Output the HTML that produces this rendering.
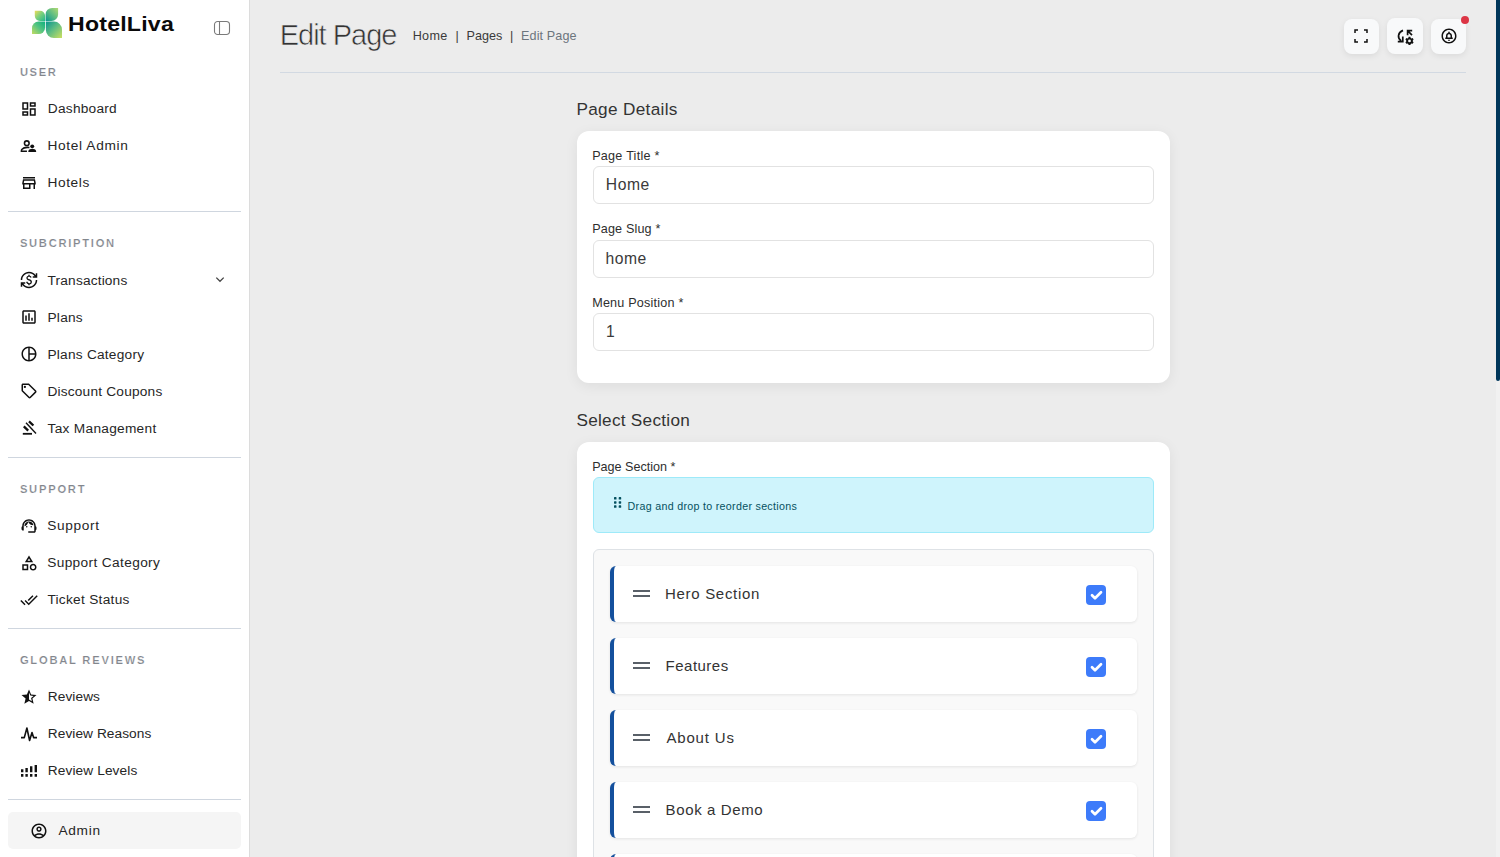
<!DOCTYPE html>
<html lang="en">
<head>
<meta charset="utf-8">
<title>Edit Page - HotelLiva</title>
<style>
*{box-sizing:border-box;margin:0;padding:0}
html,body{width:1500px;height:857px;overflow:hidden}
body{background:#ececec;font-family:"Liberation Sans",Arial,sans-serif;color:#2b2b2b;position:relative}
.abs{position:absolute;white-space:nowrap;line-height:1}
/* sidebar */
#sidebar{position:absolute;left:0;top:0;width:250px;height:857px;background:#fff;border-right:1px solid #dcdcdc}
.sec{position:absolute;left:20px;font-size:11.2px;font-weight:700;letter-spacing:2.1px;color:#82868d;-webkit-text-stroke:.2px #fff;line-height:1;white-space:nowrap}
.mi{position:absolute;left:48px;font-size:13.7px;color:#262626;line-height:1;white-space:nowrap}
.ic{position:absolute;left:19.4px;width:19.2px;height:19.2px;fill:#111}
.hr{position:absolute;left:8px;width:233px;height:1px;background:#cfd6df}
#admin{position:absolute;left:8px;top:812px;width:233px;height:37px;background:#f5f5f5;border-radius:5px}
/* header */
#h1{left:281px;top:20px;font-size:29px;font-weight:400;color:#333;-webkit-text-stroke:.6px #ececec}
.bc{font-size:12.6px;color:#3a3a3a}
.tb{position:absolute;top:19px;width:35px;height:35px;background:#f8f9fa;border-radius:8px;box-shadow:0 2px 6px rgba(0,0,0,.08)}
.tb svg{position:absolute;fill:#111}
/* cards */
.card{position:absolute;left:577px;width:593px;background:#fff;border-radius:12px;box-shadow:0 3px 14px rgba(0,0,0,.065)}
.h5{font-size:17.2px;color:#333;left:577px}
.lbl{font-size:12.6px;color:#2e2e2e;left:593px}
.inp{position:absolute;left:593px;width:561px;height:38px;border:1px solid #e2e2e2;border-radius:6px;background:#fff}
.iv{font-size:15.7px;color:#3a3a3a}
.item{position:absolute;left:610px;width:527px;height:56px;background:#fff;border-left:4px solid #14509d;border-radius:6px;box-shadow:0 1px 3px rgba(0,0,0,.09)}
.it{font-size:15px;color:#333}
.item .g{position:absolute;left:19px;top:24px;width:17px;height:7px;border-top:2px solid #596068;border-bottom:2px solid #596068}
.item .cb{position:absolute;left:472px;top:19px;width:20px;height:20px;border-radius:4px;background:#3d7bfa}
.item .cb svg{position:absolute;left:0;top:0}
</style>
</head>
<body>

<!-- ============ SIDEBAR ============ -->
<div id="sidebar">
  <svg style="position:absolute;left:30px;top:6px" width="34" height="34" viewBox="30 6 34 34">
    <defs>
      <linearGradient id="gtl" x1="1" y1="1" x2="0" y2="0"><stop offset="0" stop-color="#1fb98a"/><stop offset=".55" stop-color="#7fd07c"/><stop offset="1" stop-color="#f0dc58"/></linearGradient>
      <linearGradient id="gtr" x1="0" y1="1" x2="1" y2="0"><stop offset="0" stop-color="#0a958e"/><stop offset=".5" stop-color="#5cbc84"/><stop offset="1" stop-color="#b4da72"/></linearGradient>
      <linearGradient id="gbl" x1="1" y1="0" x2="0" y2="1"><stop offset="0" stop-color="#0cb07e"/><stop offset=".5" stop-color="#58c582"/><stop offset="1" stop-color="#c4dc62"/></linearGradient>
      <linearGradient id="gbr" x1="0" y1="0" x2="1" y2="1"><stop offset="0" stop-color="#0a958e"/><stop offset=".45" stop-color="#5cbc84"/><stop offset="1" stop-color="#cce060"/></linearGradient>
    </defs>
    <path fill="url(#gtl)" d="M34.800 10.800H40a5.100 5.100 0 0 1 5.100 5.100V20.900H39.900a5.100 5.100 0 0 1-5.100-5.100z"/>
    <path fill="url(#gtr)" d="M58.100 7.900V14.400a6.500 6.500 0 0 1-6.500 6.500H45.600V14.400a6.500 6.500 0 0 1 6.500-6.500z"/>
    <path fill="url(#gbl)" d="M32 34.100V28.100a6.500 6.500 0 0 1 6.500-6.500H45.100V27.600a6.500 6.500 0 0 1-6.500 6.500z"/>
    <path fill="url(#gbr)" d="M45.900 21.600H54a8 8 0 0 1 8 8V38H53.900a8 8 0 0 1-8-8z"/>
  </svg>
  <div class="abs" id="logotxt" style="transform:scaleX(1.1);transform-origin:0 0;left:67.80px;top:12.80px;font-size:21px;font-weight:700;color:#0a0a0a;letter-spacing:0.201px">HotelLiva</div>

  <svg style="position:absolute;left:213px;top:20px" width="18" height="16" viewBox="0 0 18 16"><rect x="1.500" y="1.500" width="15" height="13" rx="3.200" fill="none" stroke="#7a7a7a" stroke-width="1.100"/><path d="M6.500 1.500v13" stroke="#7a7a7a" stroke-width="1.100"/></svg>
  <svg style="position:absolute;left:214px;top:275px" width="12" height="10" viewBox="0 0 12 10"><path d="M2.300 2.600L6 6.300 9.700 2.600" fill="none" stroke="#444" stroke-width="1.300"/></svg>
  <div class="sec" id="s_user" style="top:67.00px;left:19.9px;letter-spacing:1.62px">USER</div>
  <div class="mi" id="t_dash" style="top:102.00px;left:47.80px;letter-spacing:0.247px">Dashboard</div>
  <div class="mi" id="t_hadm" style="top:139.00px;left:47.40px;letter-spacing:0.660px">Hotel Admin</div>
  <div class="mi" id="t_hotels" style="top:176.00px;left:47.40px;letter-spacing:0.640px">Hotels</div>
  <div class="hr" style="top:211px"></div>

  <div class="sec" id="s_sub" style="top:238.00px;left:19.9px;letter-spacing:1.72px">SUBCRIPTION</div>
  <div class="mi" id="t_trans" style="top:274.00px;left:47.60px;letter-spacing:0.162px">Transactions</div>
  <div class="mi" id="t_plans" style="top:311.00px;left:47.50px;letter-spacing:0.228px">Plans</div>
  <div class="mi" id="t_pcat" style="top:348.00px;left:47.50px;letter-spacing:0.225px">Plans Category</div>
  <div class="mi" id="t_disc" style="top:385.00px;left:47.40px;letter-spacing:0.200px">Discount Coupons</div>
  <div class="mi" id="t_tax" style="top:422.00px;left:47.60px;letter-spacing:0.278px">Tax Management</div>
  <div class="hr" style="top:457px"></div>

  <div class="sec" id="s_support" style="top:484.00px;left:19.9px;letter-spacing:1.76px">SUPPORT</div>
  <div class="mi" id="t_supp" style="top:519.00px;left:47.20px;letter-spacing:0.667px">Support</div>
  <div class="mi" id="t_scat" style="top:556.00px;left:47.20px;letter-spacing:0.360px">Support Category</div>
  <div class="mi" id="t_tick" style="top:593.00px;left:47.40px;letter-spacing:0.283px">Ticket Status</div>
  <div class="hr" style="top:628px"></div>

  <div class="sec" id="s_global" style="top:655.00px;left:19.9px;letter-spacing:1.76px">GLOBAL REVIEWS</div>
  <div class="mi" id="t_rev" style="top:690.00px;left:47.80px;letter-spacing:0.067px">Reviews</div>
  <div class="mi" id="t_rreas" style="top:727.00px;left:47.80px;letter-spacing:0.063px">Review Reasons</div>
  <div class="mi" id="t_rlev" style="top:764.00px;left:47.80px;letter-spacing:0.100px">Review Levels</div>
  <div class="hr" style="top:799px"></div>

  <div id="admin"></div>
  <!-- menu icons -->
  <svg class="ic" id="ic_dashboard" style="left:20.00px;top:99.95px;width:18px;height:18px" viewBox="0 0 24 24"><path d="M19 5v2h-4V5h4M9 5v6H5V5h4m10 8v6h-4v-6h4M9 17v2H5v-2h4M21 3h-8v6h8V3zM11 3H3v10h8V3zm10 8h-8v10h8V11zm-10 4H3v6h8v-6z"/></svg>
  <svg class="ic" id="ic_supervisor" style="left:19.02px;top:137.25px;width:18.69px;height:18.69px" viewBox="0 0 24 24"><circle cx="10" cy="8" r="3" fill="none" stroke="#111" stroke-width="2"/><path d="M13.400 13.500C9.500 13 5.200 14.200 3.800 15.700 3.100 16.400 3.100 17 3.100 18.200H10.200" fill="none" stroke="#111" stroke-width="2"/><circle cx="17" cy="12" r="2.500"/><path d="M12 19.200v-1c0-2.100 3.300-3.100 5-3.100s5 1 5 3.100v1z"/></svg>
  <svg class="ic" id="ic_store" style="left:20.00px;top:173.90px;width:18px;height:18px" viewBox="0 0 24 24"><path d="M18.36 9l.6 3H5.04l.6-3h12.72M20 4H4v2h16V4zm0 3H4l-1 5v2h1v6h10v-6h4v6h2v-6h1v-2l-1-5zM6 18v-4h6v4H6z"/></svg>
  <svg class="ic" id="ic_currency" style="left:20.05px;top:270.70px;width:18px;height:18px" viewBox="0 0 24 24"><path d="M12.89 11.1c-1.78-.59-2.64-.96-2.64-1.9 0-1.02 1.11-1.39 1.81-1.39 1.31 0 1.79.99 1.9 1.34l1.58-.67c-.15-.44-.82-1.91-2.66-2.23V5h-1.75v1.26c-2.6.56-2.62 2.85-2.62 2.96 0 2.27 2.25 2.91 3.35 3.31 1.58.56 2.28 1.07 2.28 2.03 0 1.13-1.05 1.61-1.98 1.61-1.82 0-2.34-1.87-2.4-2.09l-1.66.67c.63 2.19 2.28 2.78 3.02 2.96V19h1.75v-1.24c.52-.09 3.02-.59 3.02-3.22.01-1.39-.6-2.61-3-3.44zM3 21H1v-6h6v2H4.520c1.610 2.410 4.360 4 7.480 4 4.970 0 9-4.030 9-9h2c0 6.080-4.920 11-11 11-3.720 0-7.010-1.850-9-4.670V21zm-2-9C1 5.920 5.920 1 12 1c3.720 0 7.010 1.850 9 4.670V3h2v6h-6V7h2.480C17.870 4.590 15.120 3 12 3c-4.970 0-9 4.030-9 9H1z"/></svg>
  <svg class="ic" id="ic_chart" style="left:19.90px;top:308.00px;width:18px;height:18px" viewBox="0 0 24 24"><path d="M9 17H7v-7h2v7zm4 0h-2V7h2v10zm4 0h-2v-4h2v4zm2 2H5V5h14v14zm0-16H5c-1.100 0-2 .9-2 2v14c0 1.100.9 2 2 2h14c1.100 0 2-.9 2-2V5c0-1.100-.9-2-2-2z"/></svg>
  <svg class="ic" id="ic_pie" style="left:20.00px;top:344.85px;width:18px;height:18px" viewBox="0 0 24 24"><path d="M12 2C6.470 2 2 6.470 2 12s4.470 10 10 10 10-4.470 10-10S17.530 2 12 2zm1 2.070c3.610.450 6.480 3.330 6.930 6.930H13V4.070zM4 12c0-4.060 3.070-7.440 7-7.930v15.870c-3.930-.5-7-3.880-7-7.940zm9 7.930V13h6.930c-.450 3.610-3.320 6.480-6.930 6.930z"/></svg>
  <svg class="ic" id="ic_sell" style="left:20.10px;top:381.70px;width:18px;height:18px" viewBox="0 0 24 24"><path d="M21.410 11.410l-8.830-8.830C12.210 2.210 11.700 2 11.170 2H4c-1.100 0-2 .9-2 2v7.170c0 .53.210 1.040.59 1.410l8.830 8.830c.78.78 2.050.78 2.830 0l7.170-7.170c.78-.78.78-2.040-.010-2.830zM12.830 20L4 11.170V4h7.170L20 12.830 12.830 20z"/><circle cx="6.500" cy="6.500" r="1.500"/></svg>
  <svg class="ic" id="ic_gavel" style="left:14px;top:410px;width:30px;height:30px" viewBox="14 410 30 30"><g stroke="#111" fill="none"><path d="M29 421.300L33.400 425.500M23.800 426.400L28.200 430.600" stroke-width="2.300"/><path d="M26 422.800L36 433.400" stroke-width="1.400"/><path d="M22.800 433.800H32" stroke-width="1.800"/></g></svg>
  <svg class="ic" id="ic_agent" style="left:20.30px;top:516.95px;width:18px;height:18px" viewBox="0 0 24 24"><path d="M21 12.220C21 6.730 16.740 3 12 3c-4.690 0-9 3.650-9 9.280-.6.340-1 .980-1 1.720v2c0 1.100.9 2 2 2h1v-6.100c0-3.870 3.130-7 7-7s7 3.130 7 7V19h-8v2h8c1.100 0 2-.9 2-2v-1.220c.59-.31 1-.92 1-1.640v-2.300c0-.70-.41-1.310-1-1.620z"/><circle cx="9" cy="13" r="1"/><circle cx="15" cy="13" r="1"/><path d="M18 11.030C17.520 8.180 15.040 6 12.050 6c-3.030 0-6.290 2.510-6.030 6.450 2.470-1.010 4.330-3.210 4.860-5.890 1.310 2.630 4 4.440 7.120 4.470z"/></svg>
  <svg class="ic" id="ic_category" style="left:20.25px;top:553.95px;width:18px;height:18px" viewBox="0 0 24 24"><path d="M12 2l-5.500 9h11L12 2zm0 3.840L13.930 9h-3.870L12 5.840zM17.500 13c-2.490 0-4.500 2.010-4.500 4.500s2.010 4.500 4.500 4.500 4.500-2.010 4.500-4.500-2.010-4.500-4.500-4.500zm0 7c-1.380 0-2.500-1.120-2.500-2.500s1.120-2.500 2.500-2.500 2.500 1.120 2.500 2.500-1.120 2.500-2.500 2.500zM3 21.500h8v-8H3v8zm2-6h4v4H5v-4z"/></svg>
  <svg class="ic" id="ic_doneall" style="left:20.08px;top:590.80px;width:18px;height:18px" viewBox="0 0 24 24"><path d="M18 7l-1.410-1.410-6.340 6.340 1.410 1.410L18 7zm4.240-1.410L11.660 16.170 7.480 12l-1.410 1.410L11.660 19l12-12-1.420-1.410zM.41 13.410L6 19l1.410-1.410L1.830 12 .41 13.410z"/></svg>
  <svg class="ic" id="ic_star" style="left:20.10px;top:688.20px;width:18px;height:18px" viewBox="0 0 24 24"><path d="M22 9.240l-7.190-.62L12 2 9.190 8.630 2 9.240l5.460 4.730L5.820 21 12 17.270 18.180 21l-1.630-7.030L22 9.240zM12 15.400V6.100l1.710 4.040 4.380.38-3.320 2.880 1 4.280L12 15.400z"/></svg>
  <svg class="ic" id="ic_vital" style="left:14px;top:720px;width:30px;height:30px" viewBox="14 720 30 30"><path d="M21 737.600H24.300L26.900 728 29.600 740.500 32 732.500 33.600 737.600H37" fill="none" stroke="#111" stroke-width="1.600" stroke-linejoin="round"/></svg>
  <svg class="ic" id="ic_levels" style="left:14px;top:755px;width:30px;height:30px" viewBox="14 755 30 30"><path d="M21 769.2h2.400V772.300h-2.400zM21 774.100h2.400v2.700h-2.400zM25.4 768.1h2.400V772.300h-2.400zM25.4 774.100h2.400v2.700h-2.400zM30 766.3h2.400V772.300h-2.400zM30 774.100h2.400v2.700h-2.400zM34.6 765h2.400V772.300h-2.400zM34.6 774.100h2.400v2.700h-2.400z"/></svg>
  <svg class="ic" id="ic_account" style="left:29.90px;top:821.85px;width:18px;height:18px" viewBox="0 0 24 24"><path d="M12 2C6.480 2 2 6.480 2 12s4.480 10 10 10 10-4.480 10-10S17.520 2 12 2zM7.350 18.500C8.660 17.560 10.260 17 12 17s3.340.56 4.650 1.500C15.340 19.440 13.740 20 12 20s-3.340-.56-4.650-1.500zm10.790-1.380C16.450 15.800 14.320 15 12 15s-4.450.80-6.140 2.120C4.700 15.730 4 13.950 4 12c0-4.420 3.580-8 8-8s8 3.580 8 8c0 1.950-.70 3.730-1.860 5.120zM12 6c-1.930 0-3.500 1.570-3.500 3.500S10.070 13 12 13s3.500-1.570 3.500-3.500S13.930 6 12 6zm0 5c-.83 0-1.500-.67-1.500-1.500S11.170 8 12 8s1.500.67 1.500 1.500S12.830 11 12 11z"/></svg>
  <div class="mi" id="t_admin" style="left:58.40px;top:824.21px;letter-spacing:0.700px">Admin</div>
</div>

<!-- ============ HEADER ============ -->
<div class="abs" id="h1" style="left:279.70px;top:20.71px;letter-spacing:-1.000px">Edit Page</div>
<div class="abs bc" id="b_home" style="left:412.70px;top:29.90px;letter-spacing:0.334px">Home</div>
<div class="abs bc" id="b_p1" style="left:455.4px;top:29.91px">|</div>
<div class="abs bc" id="b_pages" style="left:466.50px;top:29.90px;letter-spacing:0.000px">Pages</div>
<div class="abs bc" id="b_p2" style="left:509.9px;top:29.91px">|</div>
<div class="abs bc" id="b_edit" style="left:521.00px;top:29.90px;color:#6c757d;letter-spacing:0.125px">Edit Page</div>
<div style="position:absolute;left:280px;top:72px;width:1186px;height:1px;background:#d2d9e2"></div>

<div class="tb" style="left:1344px"><svg style="left:8.45px;top:7.9px" width="18" height="18" viewBox="0 0 24 24"><path d="M3 21v-5h2v3h3v2H3zm13 0v-2h3v-3h2v5h-5zM3 8V3h5v2H5v3H3zm16 0V5h-3V3h5v5h-2z"/></svg></div>
<div class="tb" style="left:1387px;top:18px;width:36px;height:36px"><svg style="left:0;top:0" width="36" height="36" viewBox="0 0 36 36"><g fill="none" stroke="#111" stroke-width="1.7"><path d="M16 12.400C10.800 14.600 10 19.800 14.200 23"/><path d="M10.800 23.600H15.800V18.600"/><path d="M25.200 12.700H20.600V17.300M20.800 12.900L25 17.100"/></g><path fill-rule="evenodd" d="M21.600 18.800h1.800l.3 1.100.9.500 1.100-.3.900 1.500-.8.800v1l.8.800-.9 1.500-1.100-.3-.9.500-.3 1.100h-1.800l-.3-1.100-.9-.500-1.100.3-.9-1.500.8-.8v-1l-.8-.800.9-1.500 1.100.3.900-.500zM22.500 21.500a1.400 1.400 0 1 0 0 2.800 1.400 1.400 0 0 0 0-2.800z"/></g></svg></div>
<div class="tb" style="left:1431px"><svg style="left:8.5px;top:7.7px" width="18" height="18" viewBox="0 0 24 24"><path d="M12 18.500c.83 0 1.500-.67 1.500-1.500h-3c0 .83.67 1.500 1.500 1.500zM12 2C6.480 2 2 6.480 2 12s4.480 10 10 10 10-4.480 10-10S17.520 2 12 2zm0 18c-4.410 0-8-3.590-8-8s3.590-8 8-8 8 3.590 8 8-3.590 8-8 8zm4-8.500c0-1.860-1.280-3.410-3-3.860V7c0-.55-.45-1-1-1s-1 .45-1 1v.64c-1.720.45-3 2-3 3.860V14H7v2h10v-2h-1v-2.500zM14 14h-4v-2.500c0-1.100.9-2 2-2s2 .9 2 2V14z"/></svg></div>
<div style="position:absolute;left:1461px;top:16px;width:8px;height:8px;border-radius:50%;background:#dc3545"></div>

<!-- scrollbar -->
<div style="position:absolute;left:1496px;top:0;width:4px;height:857px;background:#f1f1f1"></div>
<div style="position:absolute;left:1496px;top:0;width:4px;height:381px;background:#00365a;border-radius:0 0 2px 2px"></div>

<!-- ============ PAGE DETAILS ============ -->
<div class="abs h5" id="h_pd" style="top:101.11px;left:576.40px;letter-spacing:0.329px">Page Details</div>
<div class="card" style="top:131px;height:252px"></div>
<div class="abs lbl" id="l_title" style="top:150.30px;left:592.20px;letter-spacing:0.253px">Page Title *</div>
<div class="inp" style="top:166px"></div>
<div class="abs iv" id="v_home" style="left:605.80px;top:177.00px;letter-spacing:0.532px">Home</div>
<div class="abs lbl" id="l_slug" style="top:223.41px;left:592.20px;letter-spacing:0.160px">Page Slug *</div>
<div class="inp" style="top:240px"></div>
<div class="abs iv" id="v_slug" style="left:605.40px;top:251.00px;letter-spacing:0.534px">home</div>
<div class="abs lbl" id="l_menu" style="top:297.21px;left:592.20px;letter-spacing:0.213px">Menu Position *</div>
<div class="inp" style="top:313px"></div>
<div class="abs iv" id="v_one" style="left:606.00px;top:324.11px;letter-spacing:0.000px">1</div>

<!-- ============ SELECT SECTION ============ -->
<div class="abs h5" id="h_ss" style="top:412.30px;left:576.40px;letter-spacing:0.276px">Select Section</div>
<div class="card" style="top:442px;height:440px;border-radius:12px 12px 0 0"></div>
<div class="abs lbl" id="l_sec" style="top:461.00px;left:592.20px;letter-spacing:0.000px">Page Section *</div>
<div style="position:absolute;left:593px;top:477px;width:561px;height:56px;background:#cff4fc;border:1px solid #9eeaf9;border-radius:6px"></div>
<svg style="position:absolute;left:613px;top:496px" width="10" height="13" viewBox="0 0 10 13" fill="#055160"><rect x="1" y="1.100" width="2.500" height="2.500" rx=".6"/><rect x="5.700" y="1.100" width="2.500" height="2.500" rx=".6"/><rect x="1" y="5.200" width="2.500" height="2.500" rx=".6"/><rect x="5.700" y="5.200" width="2.500" height="2.500" rx=".6"/><rect x="1" y="9.300" width="2.500" height="2.500" rx=".6"/><rect x="5.700" y="9.300" width="2.500" height="2.500" rx=".6"/></svg>
<div class="abs" id="drag" style="left:627.60px;top:500.80px;font-size:10.7px;color:#055160;letter-spacing:0.292px">Drag and drop to reorder sections</div>

<div style="position:absolute;left:593px;top:549px;width:561px;height:330px;background:#f9f9f9;border:1px solid #dee2e6;border-radius:6px"></div>
<div class="item" style="top:566px"><i class="g"></i><i class="cb"><svg width="20" height="20" viewBox="0 0 20 20"><path d="M6 10.300l3 3 6-6" fill="none" stroke="#fff" stroke-width="2.700" stroke-linecap="round" stroke-linejoin="round"/></svg></i></div>
<div class="abs it" id="i_hero" style="left:665.00px;top:585.80px;letter-spacing:0.693px">Hero Section</div>
<div class="item" style="top:638px"><i class="g"></i><i class="cb"><svg width="20" height="20" viewBox="0 0 20 20"><path d="M6 10.300l3 3 6-6" fill="none" stroke="#fff" stroke-width="2.700" stroke-linecap="round" stroke-linejoin="round"/></svg></i></div>
<div class="abs it" id="i_feat" style="left:665.60px;top:657.80px;letter-spacing:0.484px">Features</div>
<div class="item" style="top:710px"><i class="g"></i><i class="cb"><svg width="20" height="20" viewBox="0 0 20 20"><path d="M6 10.300l3 3 6-6" fill="none" stroke="#fff" stroke-width="2.700" stroke-linecap="round" stroke-linejoin="round"/></svg></i></div>
<div class="abs it" id="i_about" style="left:666.40px;top:729.80px;letter-spacing:0.828px">About Us</div>
<div class="item" style="top:782px"><i class="g"></i><i class="cb"><svg width="20" height="20" viewBox="0 0 20 20"><path d="M6 10.300l3 3 6-6" fill="none" stroke="#fff" stroke-width="2.700" stroke-linecap="round" stroke-linejoin="round"/></svg></i></div>
<div class="abs it" id="i_book" style="left:665.60px;top:801.80px;letter-spacing:0.620px">Book a Demo</div>
<div class="item" style="top:854px"></div>

</body>
</html>
